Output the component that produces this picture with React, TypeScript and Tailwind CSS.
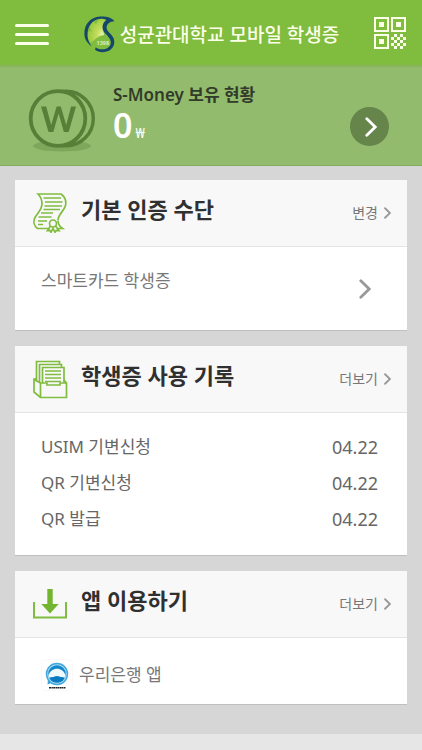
import type { ReactNode } from 'react'

const records = [
  { name: 'USIM 기변신청', date: '04.22' },
  { name: 'QR 기변신청', date: '04.22' },
  { name: 'QR 발급', date: '04.22' },
]

function Chevron({ className, strokeWidth = 2.8 }: { className: string; strokeWidth?: number }) {
  return (
    <svg viewBox="0 0 12 20" className={className} fill="none" stroke="currentColor" strokeLinecap="round" aria-hidden="true">
      <path d="M1.8 1.8 10.2 10l-8.4 8.2" strokeWidth={strokeWidth} />
    </svg>
  )
}

function SchoolLogo() {
  return (
    <svg viewBox="0 0 32 37" className="w-8 h-[37px] shrink-0" fill="none" aria-hidden="true">
      <defs>
        <radialGradient id="leaf" cx="0.85" cy="0.7" r="0.85">
          <stop offset="0" stopColor="#f0f4bc" />
          <stop offset="0.4" stopColor="#c4dc5c" />
          <stop offset="1" stopColor="#93c83c" />
        </radialGradient>
      </defs>
      <path
        d="M20 19c-3 .5-6 1.500-8.500 4-2 2-3.500 3-5 3.500C3.500 24 3 20 3.300 16.500c1.200-1 2-1.500 5-1.500-1.500-1-2-2-2.300-4C7 8.500 7.500 7 9 5.500c1.500.5 2.500 1.500 3 3 .5-2 1.500-4 4-5.500 2-.3 4 0 6 1-2 3-3.500 5-3 8.500.2 2.500.8 4.500 1 6.500z"
        fill="url(#leaf)"
      />
      <path
        d="M30.500 5.200C27.500 1.500 22 .3 16 .6 6 1.500.4 8.500.4 17.500c0 5 2.300 9.500 7.200 12.800C4.500 26 3 21.500 3.600 16.500 4.500 8 10 3 17 2.800c2.500 0 4.300.4 5.500 1.200-3.800 2.500-5 7-3 11 1.500 3.200 6.800 6 7.300 11 .3 4-2.800 6.600-7 7.200-3.200.5-6.300-.3-8-2l-.8 2.600c3 2.500 7.500 3 11.500 1.800 5-1.500 8-5.500 7.800-10.200-.3-6-5.800-8.300-7.400-12.200-1.200-3.300 1.300-8 7.600-8z"
        fill="#14476b"
      />
      <text x="12.5" y="29" fontSize="5.5" fontWeight="700" fill="#d9edc0">1398</text>
    </svg>
  )
}

function QrIcon() {
  return (
    <svg viewBox="0 0 32 32" className="size-8" fill="none" shapeRendering="crispEdges" aria-hidden="true">
      <g stroke="#fbffe9" strokeWidth="2">
        <path d="M1 1h13v13H1zM18 1h13v13H18zM1 18h13v13H1z" />
      </g>
      <g fill="#fbffe9">
        <path d="M5 5h5v5H5zM22 5h5v5h-5zM5 22h5v5H5z" />
        <path d="M20 17h3v3h-3zM26 17h3v3h-3zM17 20h3v3h-3zM23 20h3v3h-3zM29 20h3v3h-3zM20 23h3v3h-3zM26 23h3v3h-3zM17 26h3v3h-3zM23 26h3v3h-3zM29 26h3v3h-3zM20 29h3v3h-3zM26 29h3v3h-3z" />
      </g>
    </svg>
  )
}

function CoinIcon() {
  return (
    <svg viewBox="0 0 68 64" className="w-[68px] h-16 shrink-0" fill="none" aria-hidden="true">
      <ellipse cx="34" cy="57" rx="29" ry="5.5" fill="#7da75a" />
      <circle cx="38" cy="29.5" r="27.3" fill="#92bb6d" stroke="#587f38" strokeWidth="3.4" />
      <path d="M44 5c17 11 17 38 0 49" stroke="#587f38" strokeWidth="2.5" />
      <circle cx="30" cy="29.5" r="27.3" fill="#92bb6d" stroke="#587f38" strokeWidth="3.8" />
      <path
        d="M13 17.500h5.200l5 18.500 5.400-18.500h4.200L38.200 36l4.900-18.500h4.900L40.700 43h-4.800L30.600 24.600 25.300 43h-4.800z"
        fill="#587f38"
      />
    </svg>
  )
}

function CertificateIcon() {
  return (
    <svg viewBox="0 0 34 40" className="w-[34px] h-10" fill="none" stroke="#80bc3f" strokeWidth="1.7" aria-hidden="true">
      <path d="M15.500 35.500H4.500C1 33 0 28.500 2 24.500 4.500 20 9 16.500 9 11 9 6.500 7.500 3.500 5 1h23c3.500 2.500 5.500 7 4.500 11.500C31 18 25.500 21 25 27" />
      <path d="M24.500 35.500h5c-3-2-4.500-5-4.500-8" />
      <path d="M10.500 5H28M12 9h17.500M11.500 13H29M10.500 16.500H27M8 20h12M5.500 24h13M5 28h9M5 31.500h5" />
      <circle cx="20" cy="30.500" r="3.500" />
      <path d="m17.500 33-3 4.500 2.500-.2 1 2 2-4 2 4 1.300-2 2.700.2-3.500-4.500" />
    </svg>
  )
}

function RecordsIcon() {
  return (
    <svg viewBox="0 0 35 39" className="w-[35px] h-[39px]" fill="none" stroke="#80bc3f" strokeWidth="1.7" aria-hidden="true">
      <path d="M3.500 21V1.500h23V5" />
      <path d="M6.500 22V4.500h22V8" />
      <path d="M9.500 23V7.500H31V23" />
      <path d="M12 11h16M12 14.500h16M12 18h16M12 21.500h16" />
      <path d="M7.500 23 1 19.500V32l6.500 5.500h26V23H27v2H14v-2z" fill="#f8f8f8" />
      <path d="M7.500 23v14.500M1 19.500l2.500-1M31 20l2.500 3" />
    </svg>
  )
}

function DownloadIcon() {
  return (
    <svg viewBox="0 0 34 30" className="w-[34px] h-[30px]" aria-hidden="true">
      <path d="M1 13v15.500h32V13" fill="none" stroke="#80bc3f" strokeWidth="2" />
      <path d="M14.300 0h5.400v15h6L17 24.500 8.300 15h6z" fill="#73b531" />
    </svg>
  )
}

function BankIcon() {
  return (
    <svg viewBox="0 0 32 32" className="size-8 shrink-0" aria-hidden="true">
      <rect x="0.5" y="0.5" width="31" height="31" rx="5" fill="#fff" stroke="#f8f8f8" />
      <path d="M7 20 6.500 25.500l6-2.500z" fill="#3da0d8" />
      <circle cx="16" cy="15" r="10.5" fill="#a7daf3" stroke="#45a8dc" strokeWidth="1.5" />
      <circle cx="16" cy="15" r="8.7" fill="#1487ca" />
      <path d="M7.500 16.500C9 12 12 9.800 16 9.800s7 2.200 8.500 6.700c-.2 1-.6 1.800-1 2.300-1.800-.8-3-.2-4.500-.9-1.500-.6-2.200-.7-3-.7s-1.500.1-3 .7c-1.500.7-2.700.1-4.500.9-.5-.5-.9-1.300-1-2.300z" fill="#eef9fe" />
      <path d="M8.500 19c2-1.500 3.500-.3 5-1.200 1.500-.8 3.500-.8 5 0 1.500.9 3-.3 5 1.200a8.700 8.700 0 0 1-15 0z" fill="#0a7bc1" />
      <path d="M8 28.700h16.500" stroke="#222" strokeWidth="1.6" strokeDasharray="2 .4 1.500 .3" />
    </svg>
  )
}

function Card({ icon, title, more, children }: { icon: ReactNode; title: string; more: string; children: ReactNode }) {
  return (
    <section className="bg-white border-b border-[#bfbfbf]">
      <div className="h-[67px] bg-[#f8f8f8] border-b border-[#e4e4e4] pl-[18px] pr-4 flex items-center">
        <div className="w-12 flex shrink-0">{icon}</div>
        <h2 className="flex-1 text-[22px] leading-8 pb-2 font-bold text-[#303030]">{title}</h2>
        <a href="#" className="flex items-center gap-[6px] text-sm text-[#777]">
          {more}
          <Chevron className="w-[7px] h-3 text-[#999]" strokeWidth={3.2} />
        </a>
      </div>
      {children}
    </section>
  )
}

export default function App() {
  return (
    <div className="min-h-screen flex flex-col bg-[#d6d6d6] font-['Noto_Sans','Noto_Sans_CJK_KR',sans-serif]">
      <header className="h-[67px] bg-[#80bc3d] border-b-2 border-[#8ab35e] pl-[15px] pr-4 flex items-center justify-between">
        <button aria-label="메뉴" className="w-[34px] pt-1 flex flex-col gap-[6px]">
          <span className="h-[3px] rounded-full bg-[#fbffe9]" />
          <span className="h-[3px] rounded-full bg-[#fbffe9]" />
          <span className="h-[3px] rounded-full bg-[#fbffe9]" />
        </button>
        <div className="pt-1 flex items-center gap-1">
          <SchoolLogo />
          <h1 className="text-[19px] leading-7 font-medium text-[#fbffe9]">성균관대학교 모바일 학생증</h1>
        </div>
        <button aria-label="QR 코드">
          <QrIcon />
        </button>
      </header>

      <section className="h-[99px] bg-[#92bb6d] border-b border-[#84aa63] pl-7 pr-[33px] flex">
        <div className="pt-[22px]">
          <CoinIcon />
        </div>
        <div className="flex-1 pt-4 pl-[17px]">
          <h2 className="text-[17px] leading-6 font-semibold text-[#323b2a]">S-Money 보유 현황</h2>
          <p className="flex items-baseline gap-[3px] text-white">
            <span className="text-[34px] leading-9 font-semibold">0</span>
            <span className="text-sm">₩</span>
          </p>
        </div>
        <button aria-label="S-Money 상세" className="mt-10 size-[39px] rounded-full bg-[#65854b] flex items-center justify-center">
          <Chevron className="ml-0.5 w-3 h-5 text-white" />
        </button>
      </section>

      <main className="flex-1 px-[15px] pt-[14px] pb-[29px] flex flex-col gap-[15px]">
        <Card icon={<CertificateIcon />} title="기본 인증 수단" more="변경">
          <a href="#" className="h-[83px] pl-[26px] pr-9 flex items-center justify-between text-[17px] text-[#777]">
            <span className="pb-4">스마트카드 학생증</span>
            <Chevron className="w-3 h-5 text-[#999]" />
          </a>
        </Card>

        <Card icon={<RecordsIcon />} title="학생증 사용 기록" more="더보기">
          <ul className="pt-4 pb-[18px] pl-[26px] pr-[29px] text-[17px] text-[#666]">
            {records.map((r) => (
              <li key={r.name} className="h-9 flex items-center justify-between">
                <span>{r.name}</span>
                <span className="text-lg">{r.date}</span>
              </li>
            ))}
          </ul>
        </Card>

        <Card icon={<DownloadIcon />} title="앱 이용하기" more="더보기">
          <a href="#" className="h-[66px] pl-[26px] pt-2 flex items-center gap-[6px] text-[17px] text-[#777]">
            <BankIcon />
            <span>우리은행 앱</span>
          </a>
        </Card>
      </main>

      <footer className="h-4 bg-[#e6e6e6]" />
    </div>
  )
}
